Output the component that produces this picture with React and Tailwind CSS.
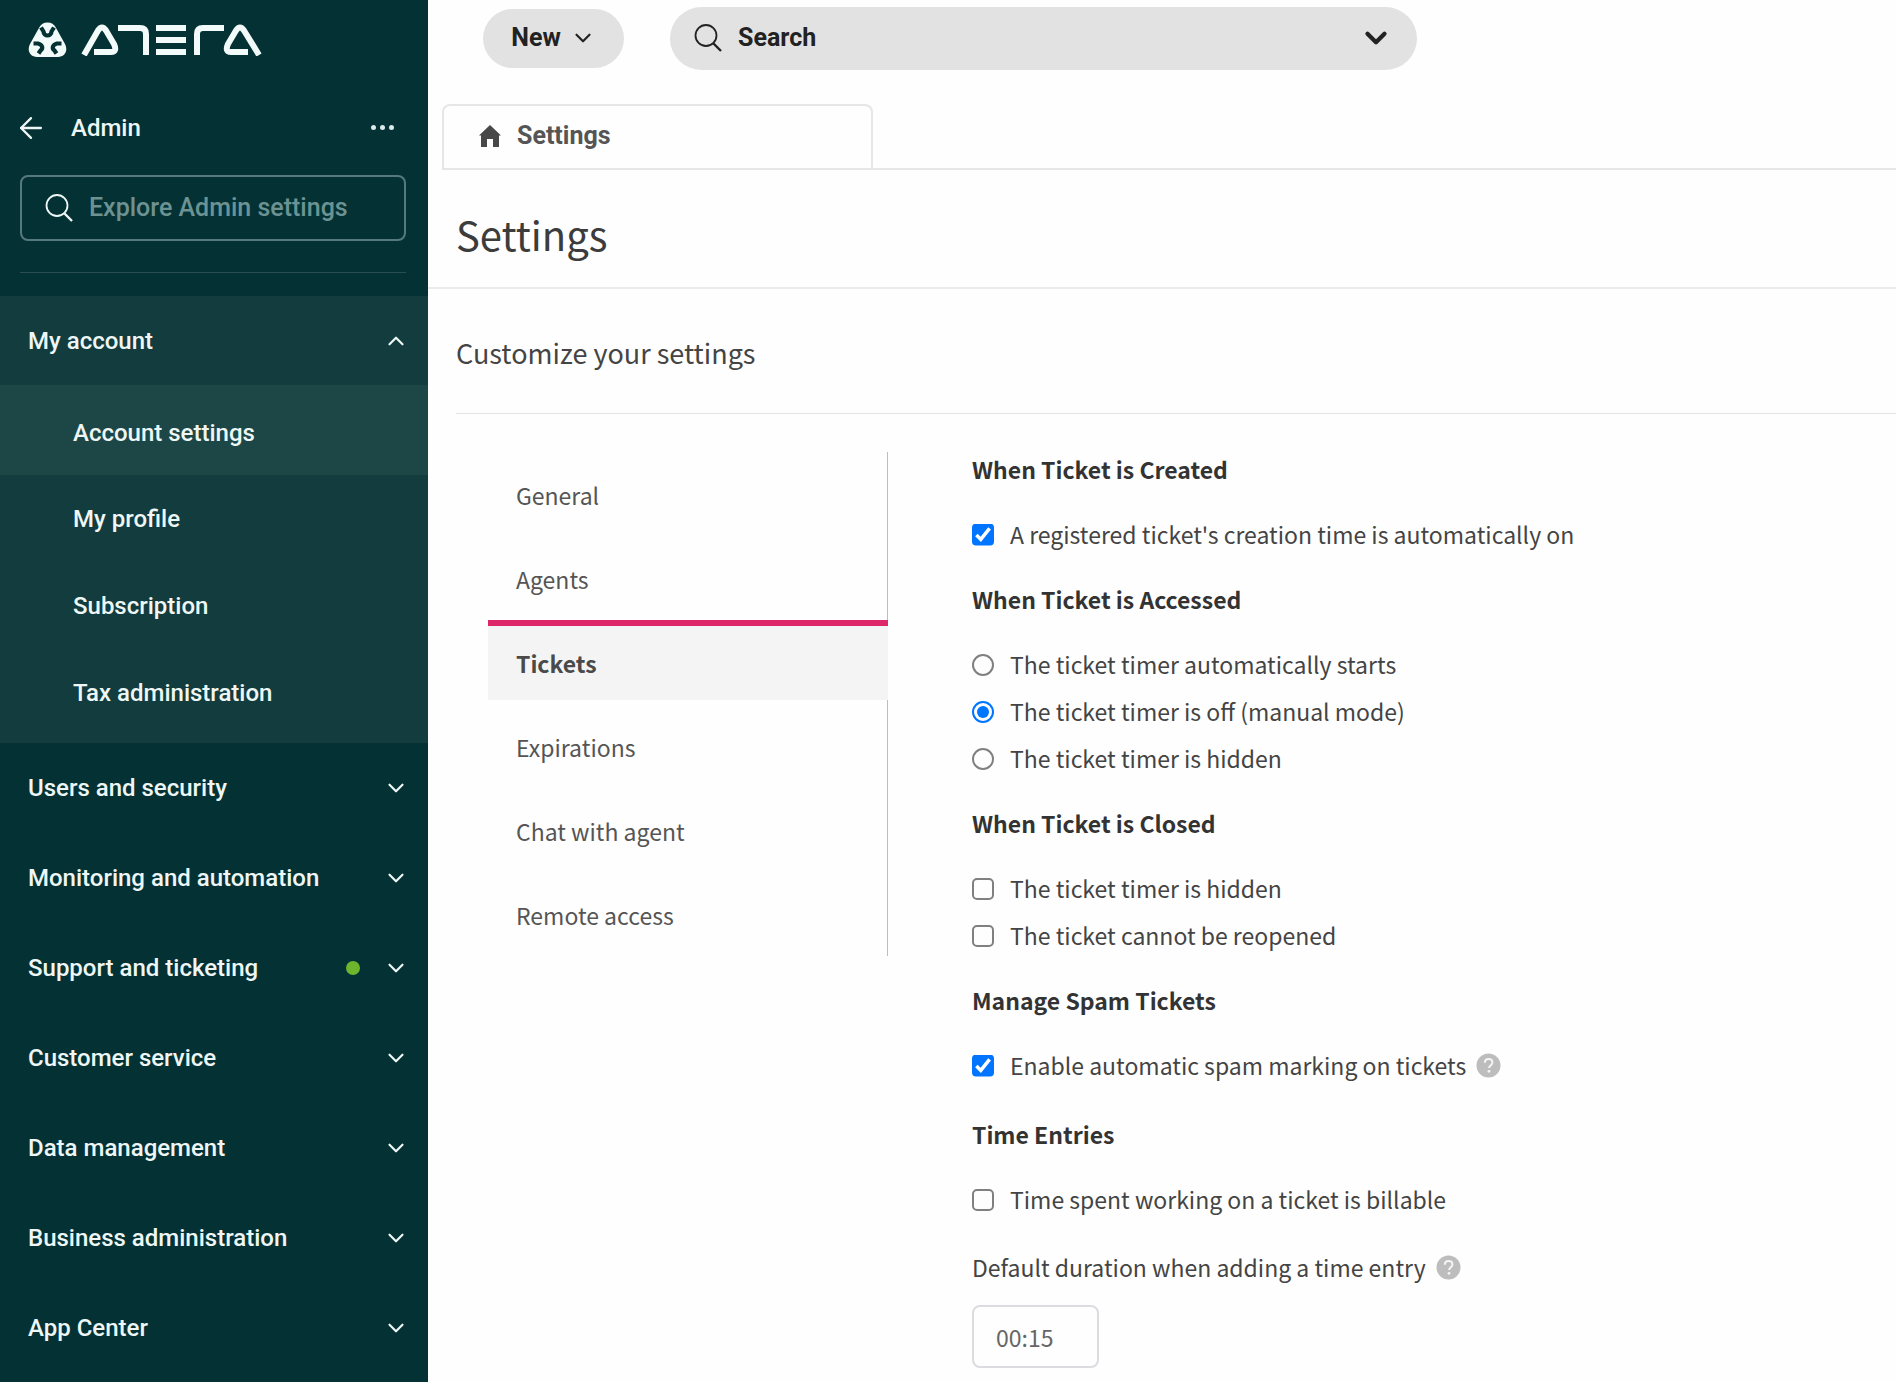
import React from 'react';
import { ArrowLeft, ChevronDown, ChevronUp } from 'lucide-react';

const accountLinks = ['My profile', 'Subscription', 'Tax administration'];

const menuSections = [
  { label: 'Users and security' },
  { label: 'Monitoring and automation' },
  { label: 'Support and ticketing', online: true },
  { label: 'Customer service' },
  { label: 'Data management' },
  { label: 'Business administration' },
  { label: 'App Center' },
];

const settingTabs = ['General', 'Agents', 'Tickets', 'Expirations', 'Chat with agent', 'Remote access'];

const Logo = () => (
  <div className="flex items-center gap-[14px] pl-7 pt-[22px]">
    <svg width="39" height="36" viewBox="0 0 39 36" aria-hidden="true">
      <path
        d="M19.5 0.5c4 0 6.500 1.800 8 4.500l9.500 17c3.500 7-0.500 13-7 13H9c-6.500 0-10.500-6-7-13l9.500-17c1.500-2.700 4-4.500 8-4.500z"
        fill="#f2fafa"
      />
      <g fill="none" stroke="#043234" strokeWidth="4.200">
        <path d="M13 5.500L15.500 9.500C15.500 14.800 23.500 14.800 23.500 9.500L26 5.500" />
        <path d="M5.500 21.500L10 21.500C14.500 22.500 15.500 26.500 12.500 28.500L10.500 31.500" />
        <path d="M33.500 21.500L29 21.500C24.500 22.500 23.500 26.500 26.500 28.500L28.500 31.500" />
      </g>
    </svg>
    <svg width="181" height="32" viewBox="0 0 181 32" fill="none" stroke="#f2fafa" strokeWidth="6" aria-label="Atera">
      <path d="M3 31L17 6.500Q21 0.500 25 6.500L33 20Q36.500 28 30 28H13" />
      <path d="M37 4H59Q65 4 65 10V31" />
      <path d="M75 4H105M75 16H105M75 28H105" />
      <path d="M116 31V10Q116 4 122 4H143" />
      <path d="M178 31L163 6.500Q159 0.500 155 6.500L147 20Q143.500 28 150 28H167" />
    </svg>
  </div>
);

const SearchIcon = () => (
  <svg width="28" height="28" viewBox="0 0 28 28" fill="none" stroke="currentColor" strokeWidth="1.800" aria-hidden="true">
    <circle cx="12" cy="11.500" r="10.500" />
    <path d="M19.500 19.500l7.500 7.500" strokeWidth="2.400" />
  </svg>
);

const HelpIcon = () => (
  <svg width="25" height="25" viewBox="0 0 25 25" role="img" aria-label="Help">
    <circle cx="12.500" cy="12.500" r="12" fill="#bdbdbd" />
    <path
      d="M8.800 9.800c0-2.300 1.600-3.800 3.800-3.800s3.800 1.400 3.800 3.400c0 2.700-3.300 2.900-3.300 5.700"
      fill="none"
      stroke="#f5f5f5"
      strokeWidth="2"
    />
    <circle cx="13" cy="18.300" r="1.400" fill="#f5f5f5" />
  </svg>
);

const Sidebar = () => (
  <aside className="w-[428px] shrink-0 bg-[#043234] text-2xl font-medium text-[#eef7f6]">
    <Logo />
    <div className="flex h-[117px] items-center pl-[14px] pr-[34px] pt-[22px]">
      <button aria-label="Back">
        <ArrowLeft size={34} strokeWidth={1.6} />
      </button>
      <h2 className="ml-[23px]">Admin</h2>
      <button aria-label="More" className="ml-auto flex gap-1">
        <span className="size-[5px] rounded-full bg-[#dceae9]" />
        <span className="size-[5px] rounded-full bg-[#dceae9]" />
        <span className="size-[5px] rounded-full bg-[#dceae9]" />
      </button>
    </div>
    <label className="ml-5 mr-[22px] flex h-[66px] items-center gap-4 rounded-lg border-2 border-[#567a7b] pl-[23px] text-[25px]">
      <SearchIcon />
      <input
        type="text"
        aria-label="Explore Admin settings"
        placeholder="Explore Admin settings"
        className="min-w-0 flex-1 bg-transparent outline-none placeholder:text-[#6d9293]"
      />
    </label>
    <hr className="ml-5 mr-[22px] mt-[31px] border-[#2a4d4f]" />
    <nav className="mt-[23px]">
      <div className="bg-[#123c3d] pb-[7px]">
        <button className="flex h-[89px] w-full items-center justify-between pl-7 pr-[19px]">
          My account
          <ChevronUp size={26} strokeWidth={2} />
        </button>
        <a href="#account" className="flex h-[90px] items-center bg-[#1d4747] pl-[73px] pt-[6px]">
          Account settings
        </a>
        {accountLinks.map((label) => (
          <a key={label} href="#account" className="flex h-[87px] items-center pl-[73px]">
            {label}
          </a>
        ))}
      </div>
      {menuSections.map(({ label, online }) => (
        <button key={label} className="flex h-[90px] w-full items-center pl-7 pr-[19px]">
          {label}
          <span className="ml-auto flex items-center gap-[23px]">
            {online && <span className="size-[14px] rounded-full bg-[#6cb52d]" />}
            <ChevronDown size={26} strokeWidth={2} />
          </span>
        </button>
      ))}
    </nav>
  </aside>
);

const TopBar = () => (
  <header className="flex items-center gap-[46px] pl-[55px] pt-[7px] text-[25px] font-bold text-[#222]">
    <button className="flex h-[59px] w-[141px] items-center justify-center gap-[9px] rounded-full bg-[#e2e2e2] pb-[2px]">
      New
      <ChevronDown size={26} strokeWidth={2} />
    </button>
    <label className="flex h-[63px] w-[747px] items-center gap-4 rounded-full bg-[#e2e2e2] px-6 pb-[2px]">
      <SearchIcon />
      <input
        type="text"
        aria-label="Search"
        placeholder="Search"
        className="min-w-0 flex-1 bg-transparent outline-none placeholder:text-[#222]"
      />
      <ChevronDown size={34} strokeWidth={3} />
    </label>
  </header>
);

const Heading = ({ children }) => <h3 className="flex h-[83px] items-center font-bold text-[#333]">{children}</h3>;

const controlStyles = {
  checkbox:
    'size-[22px] appearance-none rounded-[5px] border-2 border-[#808080] accent-[#0075ff] checked:appearance-auto checked:[clip-path:inset(0_round_4px)]',
  radio:
    'size-[22px] appearance-none rounded-full border-2 border-[#808080] bg-clip-content p-[3px] checked:border-[#0075ff] checked:bg-[#0075ff]',
};

const Option = ({ type = 'checkbox', name, label, checked, help }) => (
  <div className="flex h-[47px] items-center gap-[10px]">
    <label className="flex items-center gap-4">
      <input type={type} name={name} defaultChecked={checked} className={controlStyles[type]} />
      {label}
    </label>
    {help && <HelpIcon />}
  </div>
);

const TicketSettings = () => (
  <section className="pb-[14px]">
    <Heading>When Ticket is Created</Heading>
    <Option label="A registered ticket's creation time is automatically on" checked />
    <Heading>When Ticket is Accessed</Heading>
    <Option type="radio" name="accessed" label="The ticket timer automatically starts" />
    <Option type="radio" name="accessed" label="The ticket timer is off (manual mode)" checked />
    <Option type="radio" name="accessed" label="The ticket timer is hidden" />
    <Heading>When Ticket is Closed</Heading>
    <Option label="The ticket timer is hidden" />
    <Option label="The ticket cannot be reopened" />
    <Heading>Manage Spam Tickets</Heading>
    <Option label="Enable automatic spam marking on tickets" checked help />
    <div className="pt-1">
      <Heading>Time Entries</Heading>
      <Option label="Time spent working on a ticket is billable" />
      <div className="mt-5 flex h-12 items-center gap-[10px]">
        <label htmlFor="duration">Default duration when adding a time entry</label>
        <HelpIcon />
      </div>
      <input
        id="duration"
        type="text"
        defaultValue="00:15"
        className="mt-[14px] h-[63px] w-[127px] rounded-lg border-2 border-[#dcdce0] pl-[22px] text-[#666] outline-none"
      />
    </div>
  </section>
);

const App = () => {
  return (
    <div className="flex min-h-screen bg-[#fefefe] font-['Roboto',sans-serif]">
      <Sidebar />
      <main className="min-w-0 flex-1">
        <TopBar />
        <div className="ml-[14px] mt-[34px] border-b-2 border-[#e6e6e6]">
          <a
            href="#settings"
            className="flex h-[64px] w-[431px] items-center gap-4 rounded-t-lg border-2 border-b-0 border-[#e6e6e6] pb-[2px] pl-[35px] text-[25px] font-bold text-[#555]"
          >
            <svg width="22" height="22" viewBox="0 0 22 22" fill="#484848" aria-hidden="true">
              <path d="M11 0L22 10.500H20V22H14V14H8V22H2V10.500H0z" />
            </svg>
            Settings
          </a>
        </div>
        <div className="font-['Noto_Sans_CJK_SC',sans-serif] text-[#444]">
          <h1 className="flex h-[119px] items-center border-b-2 border-[#ebebeb] pl-7 pt-[11px] text-[40px] text-[#3c3c3c]">
            Settings
          </h1>
          <div className="pl-7">
            <h2 className="flex h-[125px] items-center border-b border-[#e4e4e4] pt-1 text-[27px]">
              Customize your settings
            </h2>
            <div className="flex items-start text-[23px]">
              <nav className="ml-8 mt-[38px] w-[400px] shrink-0 border-r border-[#bdbdbd]">
                <ul className="flex flex-col gap-1 pb-1">
                  {settingTabs.map((tab) => (
                    <li key={tab}>
                      <a
                        href="#tab"
                        className={
                          tab === 'Tickets'
                            ? '-mr-px flex h-20 items-center border-t-[6px] border-[#de2768] bg-[#f4f4f4] pl-7 font-bold text-[#4a4a4a]'
                            : 'flex h-20 items-center border-t-[6px] border-transparent pl-7 text-[#555]'
                        }
                      >
                        {tab}
                      </a>
                    </li>
                  ))}
                </ul>
              </nav>
              <div className="ml-[84px] mt-[14px]">
                <TicketSettings />
              </div>
            </div>
          </div>
        </div>
      </main>
    </div>
  );
};

export default App;
